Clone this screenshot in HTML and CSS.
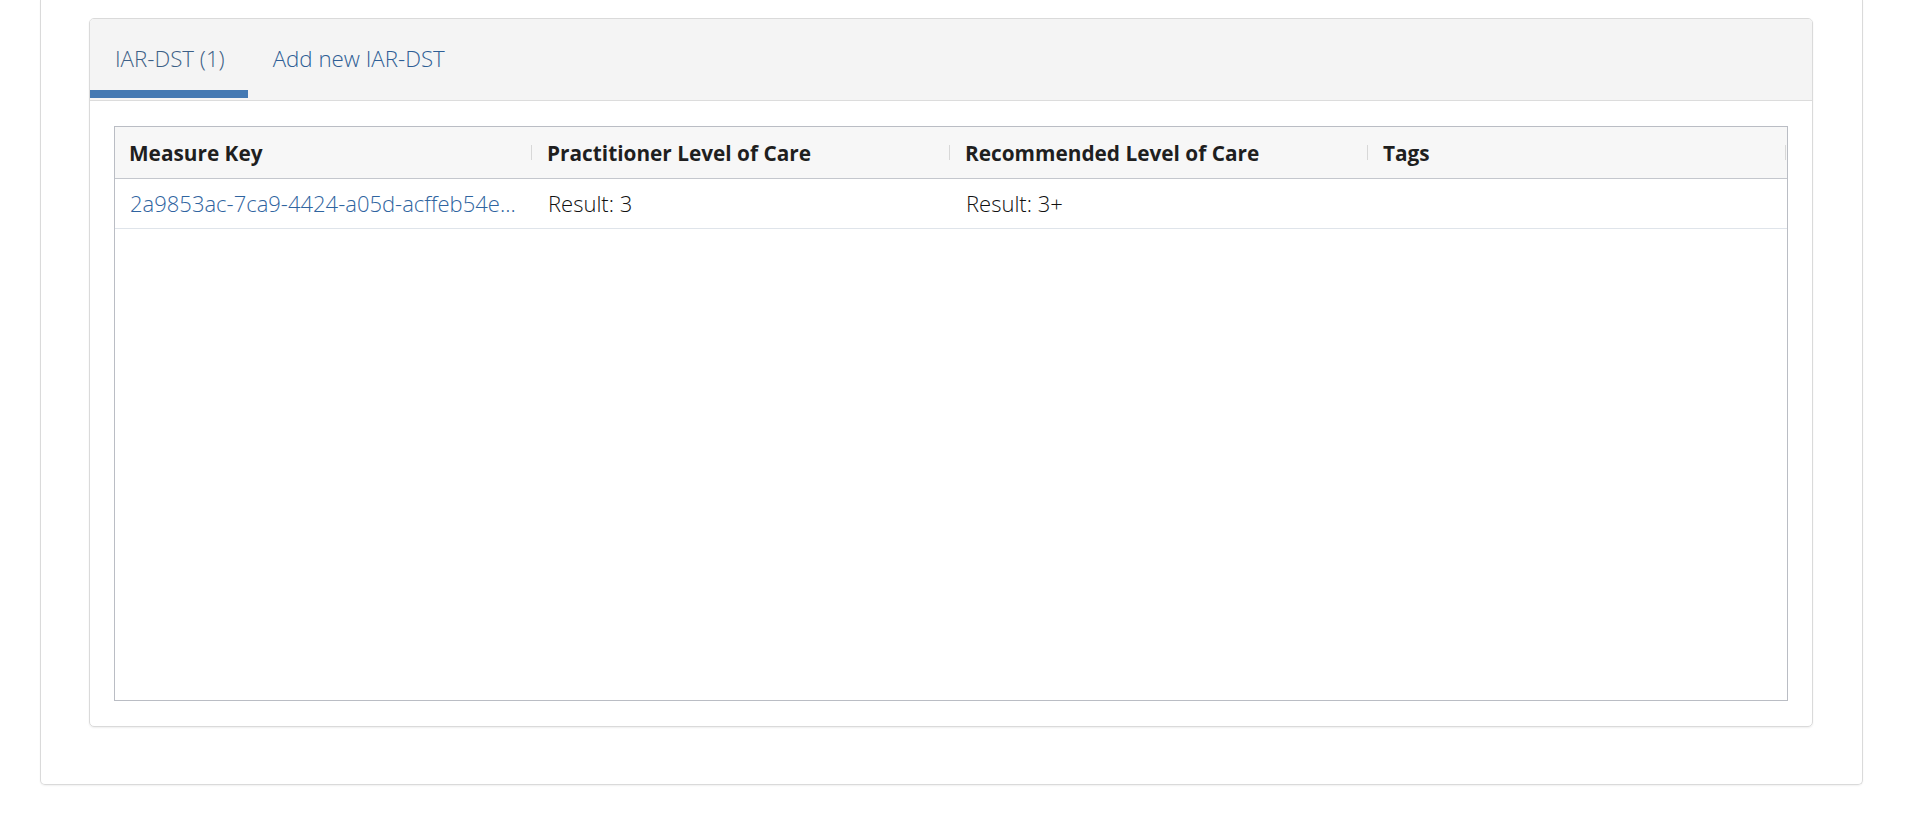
FILE: index.html
```html
<!DOCTYPE html>
<html lang="en">
<head>
<meta charset="utf-8">
<title>IAR-DST</title>
<link rel="stylesheet" href="styles.css">
</head>
<body>
<div class="outer-card">
  <div class="inner-card">
    <div class="tab-header">
      <div class="tab tab-active">IAR-DST (1)</div>
      <div class="tab">Add new IAR-DST</div>
    </div>
    <div class="tab-body">
      <div class="grid">
        <div class="grid-head">
          <div class="cell head-cell">Measure Key<span class="sep"></span></div>
          <div class="cell head-cell">Practitioner Level of Care<span class="sep"></span></div>
          <div class="cell head-cell">Recommended Level of Care<span class="sep"></span></div>
          <div class="cell head-cell">Tags<span class="sep"></span></div>
        </div>
        <div class="grid-row">
          <div class="cell"><a class="link" href="#">2a9853ac-7ca9-4424-a05d-acffeb54e…</a></div>
          <div class="cell">Result: 3</div>
          <div class="cell">Result: 3+</div>
          <div class="cell"></div>
        </div>
      </div>
    </div>
  </div>
</div>
</body>
</html>
```

FILE: styles.css
```css
* { box-sizing: border-box; }
html, body { margin: 0; padding: 0; background: #fff; }
body {
  font-family: "Open Sans", "Liberation Sans", sans-serif;
  color: #222;
  height: 828px;
  overflow: hidden;
}
.outer-card {
  margin: 0 43px 0 40px;
  padding: 18px 49px 57px 48px;
  border: 1px solid #dadada;
  border-top: none;
  border-radius: 0 0 5px 5px;
  box-shadow: 0 1px 2px rgba(0,0,0,0.06);
}
.inner-card {
  border: 1px solid #dadada;
  border-radius: 5px;
  box-shadow: 0 1px 2px rgba(0,0,0,0.07);
  overflow: hidden;
}
.tab-header {
  display: flex;
  background: #f4f4f4;
  height: 82px;
  border-bottom: 1px solid #dcdcdc;
  padding-bottom: 2px;
}
.tab {
  display: flex;
  align-items: center;
  padding: 8px 23px 0 25px;
  font-size: 22.3px;
  font-weight: 300;
  color: #2e5e95;
  border-bottom: 8px solid transparent;
}
.tab-active {
  color: #3c5f86;
  border-bottom-color: #4479b3;
}
.tab-body {
  padding: 25px 24px 25px 24px;
}
.grid {
  border: 1px solid #babdc4;
  height: 575px;
}
.grid-head {
  display: grid;
  grid-template-columns: repeat(4, 1fr);
  background: #f7f7f7;
  height: 52px;
  border-bottom: 1px solid #c4c7cd;
}
.grid-row {
  display: grid;
  grid-template-columns: repeat(4, 1fr);
  height: 50px;
  border-bottom: 1px solid #dfe4ea;
}
.cell {
  position: relative;
  display: flex;
  align-items: center;
  padding: 0 12px 2px 15px;
  font-size: 22px;
  font-weight: 300;
  color: #111;
  white-space: nowrap;
  overflow: hidden;
  min-width: 0;
}
.head-cell {
  font-size: 20.8px;
  font-weight: 700;
  color: #1f1f1f;
  padding: 1px 12px 0 14px;
}
.sep {
  position: absolute;
  right: 1px;
  top: 18px;
  width: 1px;
  height: 15px;
  background: #d8d8d8;
}
.link {
  color: #2f64a0;
  text-decoration: none;
  font-weight: 300;
  white-space: nowrap;
}
```
